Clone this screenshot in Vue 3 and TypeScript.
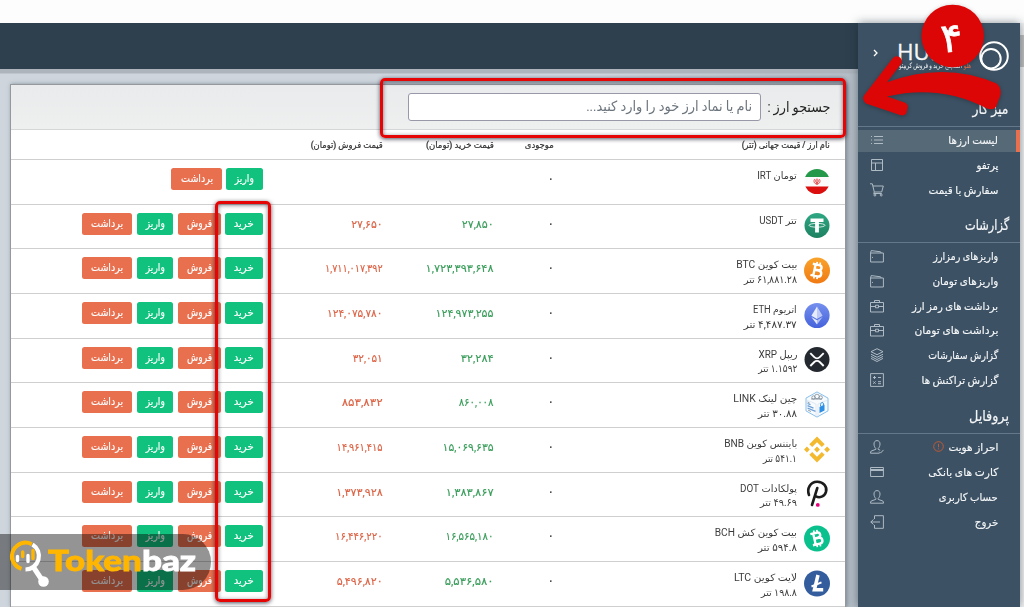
<script setup lang="ts">
import type { Directive } from 'vue'

interface Item { text: string; w: number; icon: string; active?: boolean; alert?: boolean }
interface Group { title: string; w: number; cls: string; items: Item[] }
interface Coin { key: string; name: string; nw: number; usd?: string; uw?: number; buy?: string; bw?: number; sell?: string; sw?: number }

/* Condenses a label horizontally so that it takes the given width. */
const vFit: Directive<HTMLElement, number | undefined> = {
  mounted(el, { value }) {
    if (!value) return
    const n = el.getBoundingClientRect().width
    el.style.transform = `scaleX(${value / n})`
    const side = getComputedStyle(el).direction === 'rtl' ? 'Left' : 'Right'
    el.style.transformOrigin = side === 'Left' ? 'right center' : 'left center'
    if (side === 'Left') el.style.marginLeft = `${value - n}px`
    else el.style.marginRight = `${value - n}px`
  }
}

const icons: Record<string, string> = {
  list: 'M4 3.5h9M4 7h9M4 10.5h9M1 3.5h1M1 7h1M1 10.5h1',
  layout: 'M1.5 1.5h11v11h-11zM1.5 5h11M5.5 5v7.5',
  cart: 'M0 .8h2.3l2 8.2h7.4l1.6-6H3M4.3 9l-.6 1.5h8M5.9 12a1 1 0 1 1-2 0a1 1 0 1 1 2 0M12.2 12a1 1 0 1 1-2 0a1 1 0 1 1 2 0',
  wallet: 'M.6 4h12.8v9H.6zM.6 4l.6-2.4 9.4 1.2.6 1.2M2 8.4h1',
  brief: 'M.5 3.5h13v9.5H.5zM4.5 3.5v-2h5v2M.5 7.5h5M8.5 7.5h5M5.5 6.2h3v2.6h-3z',
  layers: 'M7 .7l6 3-6 3-6-3zM1 6.2l6 3.1 6-3.1M1 8.4l6 3.1 6-3.1M1 10.4l6 3.1 6-3.1',
  calc: 'M.6.6h12.8v12.8H.6zM3 4.5h3M4.5 3v3M8 4.5h3M3.2 8.4l2.4 2.4M5.6 8.4l-2.4 2.4M8 8.7h3M8 10.7h3',
  usercheck: 'M9.500 13.200H.5c0-1 .2-1.800.7-2.200l4.600-1.600v-1C4.900 7.800 4 5.800 4 4 4 2.100 5 .6 7 .6s3 1.500 3 3.400c0 1.800-.9 3.800-1.800 4.400v1l2 .8M9 11.600l1.500 1.500 3-3.200',
  card: 'M.6 2.500h12.800v9H.6zM.6 4.500h12.800M.6 5.500h12.800',
  user: 'M7 .6c-2 0-3 1.500-3 3.400 0 1.800.9 3.800 1.800 4.400v1L1.200 11C.7 11.400.5 12.200.5 13.200h13c0-1-.2-1.800-.7-2.200L8.200 9.400v-1C9.100 7.800 10 5.800 10 4 10 2.100 9 .6 7 .6z',
  exit: 'M4.500 4V.7h8.900v12.600H4.500V10M10 7H.8M3.500 4.500L.8 7l2.700 2.500'
}

const groups: Group[] = [
  { title: 'میز کار', w: 36, cls: 'g1', items: [
    { text: 'لیست ارزها', w: 49.5, icon: 'list', active: true },
    { text: 'پرتفو', w: 22, icon: 'layout' },
    { text: 'سفارش با قیمت', w: 70, icon: 'cart' }] },
  { title: 'گزارشات', w: 44, cls: 'g2', items: [
    { text: 'واریزهای رمزارز', w: 65, icon: 'wallet' },
    { text: 'واریزهای تومان', w: 66, icon: 'wallet' },
    { text: 'برداشت های رمز ارز', w: 86, icon: 'brief' },
    { text: 'برداشت های تومان', w: 84, icon: 'brief' },
    { text: 'گزارش سفارشات', w: 70, icon: 'layers' },
    { text: 'گزارش تراکنش ها', w: 77, icon: 'calc' }] },
  { title: 'پروفایل', w: 40, cls: 'g3', items: [
    { text: 'احراز هویت', w: 50, icon: 'usercheck', alert: true },
    { text: 'کارت های بانکی', w: 70, icon: 'card' },
    { text: 'حساب کاربری', w: 59, icon: 'user' },
    { text: 'خروج', w: 23.5, icon: 'exit' }] }
]

const coins: Coin[] = [
  { key: 'irt', name: 'تومان IRT', nw: 39.5 },
  { key: 'usdt', name: 'تتر USDT', nw: 37.5, buy: '۲۷,۸۵۰', bw: 32, sell: '۲۷,۶۵۰', sw: 31.5 },
  { key: 'btc', name: 'بیت کوین BTC', nw: 61, usd: '۶۱,۸۸۱.۲۸ تتر', uw: 53, buy: '۱,۷۲۳,۳۹۳,۶۴۸', bw: 68, sell: '۱,۷۱۱,۰۱۷,۳۹۲', sw: 57.5 },
  { key: 'eth', name: 'اتریوم ETH', nw: 43.5, usd: '۴,۴۸۷.۳۷ تتر', uw: 53, buy: '۱۲۴,۹۷۳,۲۵۵', bw: 58, sell: '۱۲۴,۰۷۵,۷۸۰', sw: 55.5 },
  { key: 'xrp', name: 'ریپل XRP', nw: 39, usd: '۱.۱۵۹۲ تتر', uw: 39, buy: '۳۲,۲۸۴', bw: 33, sell: '۳۲,۰۵۱', sw: 30 },
  { key: 'link', name: 'چین لینک LINK', nw: 64, usd: '۳۰.۸۸ تتر', uw: 39, buy: '۸۶۰,۰۰۸', bw: 35, sell: '۸۵۳,۸۳۲', sw: 41 },
  { key: 'bnb', name: 'بایننس کوین BNB', nw: 73, usd: '۵۴۱.۱ تتر', uw: 34, buy: '۱۵,۰۶۹,۶۳۵', bw: 51, sell: '۱۴,۹۶۱,۴۱۵', sw: 46 },
  { key: 'dot', name: 'پولکادات DOT', nw: 57, usd: '۴۹.۶۹ تتر', uw: 37, buy: '۱,۳۸۳,۸۶۷', bw: 48, sell: '۱,۳۷۳,۹۲۸', sw: 46.5 },
  { key: 'bch', name: 'بیت کوین کش BCH', nw: 82, usd: '۵۹۴.۸ تتر', uw: 39, buy: '۱۶,۵۶۵,۱۸۰', bw: 48, sell: '۱۶,۴۴۶,۲۲۰', sw: 47.5 },
  { key: 'ltc', name: 'لایت کوین LTC', nw: 63, usd: '۱۹۸.۸ تتر', uw: 36, buy: '۵,۵۳۶,۵۸۰', bw: 49, sell: '۵,۴۹۶,۸۲۰', sw: 46 }
]
</script>

<template>
  <div class="page" dir="rtl">
    <aside class="sidebar">
      <div class="brand">
        <svg class="ring" width="30" height="30" viewBox="0 0 30 30" fill="none" stroke="#fff">
          <circle cx="15" cy="15" r="13.800" stroke-width="2" />
          <circle cx="12" cy="17.700" r="9.700" stroke-width="2" />
        </svg>
        <div class="brandtext">
          <div class="logo" dir="ltr">HULO</div>
          <div class="tag"><span v-fit="72"><b>هلو</b> اکسچنج خرید و فروش کریپتو</span></div>
        </div>
        <svg class="chev" width="6" height="8" viewBox="0 0 6 8" fill="none" stroke="#fff" stroke-width="1.300"><path d="M1 1l3 3-3 3" /></svg>
      </div>
      <section v-for="g in groups" :key="g.title" :class="['group', g.cls]">
        <h3><span v-fit="g.w">{{ g.title }}</span></h3>
        <ul>
          <li v-for="i in g.items" :key="i.text" :class="{ active: i.active }">
            <span v-fit="i.w" class="lbl">{{ i.text }}</span>
            <svg v-if="i.alert" class="alert" width="11" height="11" viewBox="0 0 11 11" fill="none" stroke="#c05a35"><circle cx="5.500" cy="5.500" r="4.800" /><path d="M5.500 2.800v3.500M5.500 7.300v1" /></svg>
            <svg class="ico" width="14" height="14" viewBox="0 0 14 14" fill="none" stroke="#b4c0c9" stroke-width=".95"><path :d="icons[i.icon]" /></svg>
          </li>
        </ul>
      </section>
    </aside>

    <div class="main">
      <header class="topbar"></header>
      <div class="content">
        <div class="card">
          <div class="search">
            <label><span v-fit="63">جستجو ارز :</span></label>
            <div class="input"><span v-fit="166">نام یا نماد ارز خود را وارد کنید...</span></div>
          </div>
          <div class="grid head">
            <div><span v-fit="88">نام ارز / قیمت جهانی (تتر)</span></div>
            <div><span v-fit="29">موجودی</span></div>
            <div><span v-fit="68">قیمت خرید (تومان)</span></div>
            <div><span v-fit="72">قیمت فروش (تومان)</span></div>
            <div></div>
          </div>
          <div v-for="c in coins" :key="c.key" class="grid row">
            <div class="coin">
              <svg class="mark" width="26" height="27" viewBox="0 0 26 26">
                <defs>
                  <clipPath id="flag"><circle cx="13" cy="13" r="12.600" /></clipPath>
                  <linearGradient id="ob" x1="0" y1="0" x2="0" y2="1"><stop offset="0" stop-color="#f9a32c" /><stop offset="1" stop-color="#f07a12" /></linearGradient>
                  <linearGradient id="ub" x1="0" y1="0" x2="0" y2="1"><stop offset="0" stop-color="#2fa884" /><stop offset="1" stop-color="#1d8160" /></linearGradient>
                  <linearGradient id="eb" x1="0" y1="0" x2="0" y2="1"><stop offset="0" stop-color="#7590ee" /><stop offset="1" stop-color="#4562dc" /></linearGradient>
                </defs>
                <g v-if="c.key === 'irt'" clip-path="url(#flag)">
                  <rect width="26" height="26" fill="#fbfbfb" /><rect width="26" height="8.500" fill="#25994a" /><rect y="18" width="26" height="8" fill="#dc0d0d" />
                  <path d="M13 10v6.500M10.700 10.500c-1.300 2-.9 4.800 2.300 5 3.200-.2 3.600-3 2.300-5M12 11c-.7 1.500-.5 3 1 3.500 1.500-.5 1.700-2 1-3.500" fill="none" stroke="#df3434" stroke-width=".85" />
                </g>
                <g v-else-if="c.key === 'usdt'">
                  <circle cx="13" cy="13" r="12.500" fill="url(#ub)" />
                  <path d="M6.500 6h13v3.600h-4.600V20h-3.800V9.600H6.500z" fill="#fff" /><ellipse cx="13" cy="12.800" rx="8" ry="1.900" fill="none" stroke="#fff" stroke-width=".8" />
                </g>
                <g v-else-if="c.key === 'btc' || c.key === 'bch'">
                  <circle cx="13" cy="13" r="13" :fill="c.key === 'btc' ? 'url(#ob)' : '#0ac18e'" />
                  <g fill="none" stroke="#fff" stroke-width="2.400" :transform="c.key === 'btc' ? 'rotate(12 13 13)' : 'rotate(-13 13 13)'">
                    <path d="M7.500 7.300h6.500c3.900 0 3.900 5.200 0 5.200h-3.600M10.600 12.700h4c4.300 0 4.300 6 0 6H7.500M10.400 7.500v11" />
                    <path d="M11.500 4.500v3M14.700 4.500v3M11.500 18.500v3M14.700 18.500v3" stroke-width="1.700" />
                  </g>
                </g>
                <g v-else-if="c.key === 'eth'">
                  <circle cx="13" cy="13" r="12.600" fill="url(#eb)" />
                  <path d="M13 4l-5.600 9.300L13 16.600z" fill="#fff" opacity=".85" /><path d="M13 4l5.600 9.300L13 16.600z" fill="#d5dcfa" opacity=".8" />
                  <path d="M7.400 14.400L13 22v-4.300z" fill="#fff" opacity=".85" /><path d="M18.600 14.400L13 22v-4.300z" fill="#c5cff6" opacity=".8" />
                </g>
                <g v-else-if="c.key === 'xrp'">
                  <circle cx="13" cy="13" r="12.500" fill="#23292f" />
                  <path d="M6.300 6.700l4 4c1.500 1.500 3.900 1.500 5.400 0l4-4M6.300 19.500l4-4c1.500-1.500 3.900-1.500 5.400 0l4 4" fill="none" stroke="#fff" stroke-width="1.900" />
                </g>
                <g v-else-if="c.key === 'link'" fill="none">
                  <path d="M13 .4l11 6.200v12.800L13 25.600 2 19.400V6.600z" fill="#f7fbfe" stroke="#7ab8ea" stroke-width=".9" />
                  <path d="M2.500 8.500l9.500 4v12M23.500 8.500L14 12.500v12" stroke="#d7e3ec" stroke-width=".7" />
                  <path d="M3.500 12l3 1.200M3.500 14.200l6 2.500M3.500 16.500l8 3.300" stroke="#6c9fd4" stroke-width="1.300" />
                  <path d="M3.500 10.500l2 .8M4 18.500l3 1.500M7 7.500h11" stroke="#7c8995" stroke-width=".8" />
                  <circle cx="9.500" cy="6" r="1.700" stroke="#72808c" stroke-width=".7" /><circle cx="13" cy="5" r="2.300" stroke="#72808c" stroke-width=".7" /><circle cx="16.700" cy="6" r="1.700" stroke="#72808c" stroke-width=".7" />
                  <path d="M15.500 15.500l5-2.500v6l-5 2.500z" fill="#2d8fe3" /><path d="M16.600 15v-2c0-2 2.800-3 2.800-.6v1.600" stroke="#2d8fe3" />
                </g>
                <g v-else-if="c.key === 'bnb'" fill="#f3ba2f">
                  <path d="M13 0l7.700 7.700-2.900 2.900L13 5.800l-4.800 4.800-2.900-2.900zM13 26l7.700-7.700-2.900-2.900L13 20.200l-4.800-4.800-2.900 2.900z" />
                  <path d="M2.900 10.100L5.800 13l-2.900 2.900L0 13zM23.100 10.100L26 13l-2.900 2.900-2.900-2.900zM13 10.100l2.900 2.900-2.900 2.900-2.900-2.900z" />
                </g>
                <g v-else-if="c.key === 'dot'" fill="none" stroke="#1c1c1c" stroke-width="2.600" stroke-linecap="round">
                  <path d="M5 14.500C2.500 8 6.500 1.500 13 1.300s10.500 5 9 10-6.500 6.400-10 4.600M13.300 7.500L8 24.500" /><circle cx="13.800" cy="24.400" r="1.900" fill="#e6007a" stroke="none" />
                </g>
                <g v-else>
                  <circle cx="13" cy="13" r="13" fill="#345d9d" />
                  <path d="M14 4.500l-3.600 14.800h8.800" fill="none" stroke="#fff" stroke-width="3.500" /><path d="M7.500 16l10-4.200" stroke="#fff" stroke-width="1.900" />
                </g>
              </svg>
              <div class="names">
                <div><span v-fit="c.nw">{{ c.name }}</span></div>
                <div v-if="c.usd" class="usd"><span v-fit="c.uw">{{ c.usd }}</span></div>
              </div>
            </div>
            <div class="num bal"><span v-fit="6.500">۰</span></div>
            <div class="num buy"><span v-if="c.buy" v-fit="c.bw">{{ c.buy }}</span></div>
            <div class="num sell"><span v-if="c.sell" v-fit="c.sw">{{ c.sell }}</span></div>
            <div class="acts">
              <template v-if="c.buy">
                <button class="btn g w-buy"><span v-fit="20">خرید</span></button>
                <button class="btn o w-sell"><span v-fit="25">فروش</span></button>
              </template>
              <button class="btn g w-dep"><span v-fit="19">واریز</span></button>
              <button class="btn o w-wd"><span v-fit="32">برداشت</span></button>
            </div>
          </div>
        </div>
      </div>
    </div>
    <div class="scroll"><i></i></div>

    <div class="frame f-search"></div>
    <div class="frame f-buy"></div>

    <div class="watermark" dir="ltr">
      <svg width="42" height="53" viewBox="0 0 42 53" fill="none">
        <path d="M22.800 7.200A13.500 13.500 0 0 0 3.600 22.800" stroke="#ffb600" stroke-width="4" />
        <path d="M3 17.500a13.500 13.500 0 0 0 9.500 14.300" stroke="#ffb600" stroke-width="4" />
        <path d="M23.500 7.500a13.500 13.500 0 0 1-7 25" stroke="#fff" stroke-width="4.200" />
        <path d="M24 29.500l10 15" stroke="#fff" stroke-width="5" /><circle cx="34.500" cy="44.500" r="5.300" fill="#fff" />
        <path d="M8.500 19.500v4M19 18.500v6" stroke="#fff" stroke-width="3.400" stroke-linecap="round" />
        <path d="M13.700 15v4.500M24 13.500v8" stroke="#ffb600" stroke-width="3.400" stroke-linecap="round" />
      </svg>
      <span v-fit="148" class="wm"><b>Token</b>baz</span>
    </div>

    <svg class="pointer" width="180" height="130" viewBox="844 0 180 130">
      <path d="M864 95.500L892.500 58.500Q896 54.500 900 57.500Q903 60 901 64L887 82.300Q945 61 996.500 83.500Q1001.500 87 1000.500 95L996 107Q993 110.500 987 108.500Q940 84 887 96.500L904.500 102.500Q908 104 907.800 107L906.500 113Q904.500 116.500 900 115L866 103.500Q861.500 99.500 864 95.500Z" fill="#dc0606" />
      <circle cx="952.700" cy="36" r="31.300" fill="#dc0606" />
      <text x="951.500" y="51.500" text-anchor="middle" transform="rotate(-5 952 38)" class="step">۴</text>
    </svg>
  </div>
</template>

<style>
body { background: #fff; overflow: hidden; }
</style>

<style scoped>
.page { position: relative; display: flex; box-sizing: border-box; width: 1024px; height: 607px; padding: 23px 4px 0 0; overflow: hidden; font-family: Roboto, "DejaVu Sans", sans-serif; color: #3c3c3c; background: #fdfdfd; }
span { display: inline-block; white-space: nowrap; }
.sidebar { flex: 0 0 162px; height: 584px; background: #3c5163; color: #f4f6f8; z-index: 1; box-shadow: 0 0 9px rgba(20, 35, 50, .5); }
.brand { display: flex; height: 70px; padding: 18px 11px 0 0; box-sizing: border-box; }
.ring { flex: none; }
.brandtext { width: 92px; margin-right: 8px; margin-top: -3px; }
.logo { padding-left: 18px; font: 22.500px/27px "Open Sans", sans-serif; text-align: left; -webkit-text-stroke: .3px #fff; }
.tag { font-size: 7.500px; line-height: 9px; height: 9px; margin-top: -4px; text-align: right; }
.tag b { color: #e8704f; font-weight: 500; }
.chev { margin: 8px 0 0; }
.group h3 { margin: 0; padding-right: 11px; font-weight: 400; font-size: 15px; line-height: 24px; height: 30px; box-sizing: border-box; border-bottom: 1px solid #64788a; -webkit-text-stroke: .2px #f4f6f8; }
.g1 h3 { height: 34px; padding-top: 4px; }
.g2 h3 { margin-top: 11px; }
.g3 h3 { margin-top: 12px; }
.group ul { list-style: none; margin: 0; padding: 3px 0 0; }
.g2 ul, .g3 ul { padding-top: 3px; }
.group li { display: flex; align-items: center; height: 22px; margin-bottom: 2.900px; padding: 0 22px 0 12px; font-size: 11px; font-weight: 500; }
.group li.active { background: #566977; border-right: 4px solid #e8704f; padding-right: 18px; }
.lbl { line-height: 20px; -webkit-text-stroke: .15px #f4f6f8; }
.alert { margin-right: 4px; margin-top: -4px; }
.ico { margin-right: auto; margin-top: -2px; overflow: visible; }
.main { flex: 1; min-width: 0; height: 584px; }
.topbar { height: 46px; background: #2e3f4e; }
.content { height: 538px; box-sizing: border-box; padding: 15px 12px 0 10px; background: linear-gradient(#adb4bc, #adb4bc 4px, transparent 5px), linear-gradient(90deg, #ced5dd 70%, #b3bdc6); }
.card { height: 523px; overflow: hidden; box-sizing: border-box; background: #fff; border: 1px solid #95999d; border-bottom: 0; box-shadow: 1px 0 4px rgba(60, 75, 90, .5); }
.search { display: flex; align-items: center; height: 45px; box-sizing: border-box; padding-right: 15px; background: linear-gradient(#e9ebec, #eeefef); border-bottom: 1px solid #d5d6d7; color: #222; font-size: 14px; }
.search label { margin-top: -1px; }
.input { width: 353px; height: 28px; box-sizing: border-box; margin-right: 6px; padding-right: 8px; border: 1px solid #9898a8; border-radius: 3px; background: #fff; color: #6c757d; font-size: 14px; line-height: 24px; }
.grid { display: grid; grid-template-columns: 276.500px 59.500px 111px 120px 1fr; padding-right: 15px; box-sizing: border-box; border-bottom: 1px solid #cfcfcf; }
.head { height: 30px; font-size: 9px; line-height: 30px; font-weight: 500; color: #333; -webkit-text-stroke: .2px #333; }
.row { height: 44.680px; }
.coin { display: flex; }
.mark { margin-top: 7.500px; flex: none; overflow: visible; }
.names { padding: 9px 7px 0 0; font-size: 10px; line-height: 14.500px; }
.names > div { height: 14.500px; }
.num { font-size: 11px; line-height: 39px; -webkit-text-stroke: .15px currentColor; }
.bal span { font-size: 13px; line-height: 30px; }
.buy { color: #3a9d5b; }
.sell { color: #dc6345; }
.acts { display: flex; gap: 4.300px; padding-top: 8px; }
.btn { display: flex; justify-content: center; align-items: center; height: 22px; padding: 0; border: 0; border-radius: 2.500px; color: #fff; font: 11px/20px Roboto, "DejaVu Sans", sans-serif; -webkit-text-stroke: .15px #fff; }
.g { background: #10c27e; }
.o { background: #e8704f; }
.w-buy { width: 38px; }
.w-sell { width: 43px; }
.w-dep { width: 36.800px; }
.w-wd { width: 50.500px; }
.scroll { position: absolute; right: 0; top: 23px; width: 4px; height: 584px; background: #f3f3f3; }
.scroll i { display: block; margin-top: 12px; height: 32px; background: #c1c1c1; }
.frame { position: absolute; box-sizing: border-box; border: 3px solid #e60505; border-radius: 5px; z-index: 2; box-shadow: 0 1px 4px rgba(20, 20, 40, .75), inset 0 1px 4px rgba(20, 20, 40, .6); }
.f-search { left: 380px; top: 78px; width: 466px; height: 60px; }
.f-buy { left: 214.500px; top: 200.500px; width: 56px; height: 401px; }
.watermark { position: absolute; z-index: 1; left: 0; top: 534px; width: 211px; height: 56px; border-radius: 0 28px 28px 0; background: rgba(0, 0, 0, .42); display: flex; }
.watermark svg { flex: none; margin: 3px 0 0 9px; }
.wm { align-self: flex-start; margin-left: -3px; margin-top: 6px; font: 900 29px/40px Lato, sans-serif; color: #fff; -webkit-text-stroke: .8px currentColor; }
.wm b { color: #ffb600; font-weight: 900; }
.pointer { position: absolute; left: 844px; top: 0; z-index: 3; filter: drop-shadow(0 1px 2px rgba(0, 0, 0, .25)); }
.step { font: 40px "DejaVu Sans", sans-serif; fill: #fff; stroke: #fff; stroke-width: .8px; }
</style>
